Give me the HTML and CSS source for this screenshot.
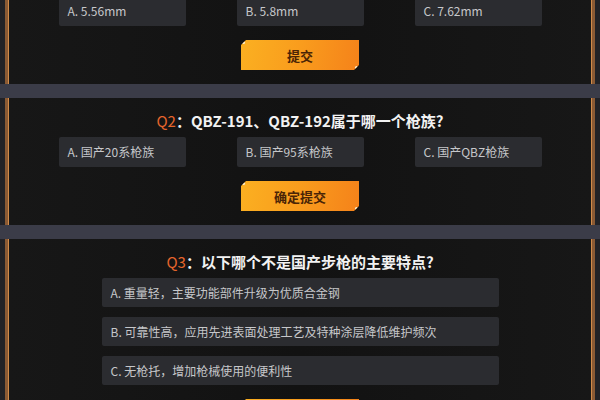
FILE: index.html
```html
<!DOCTYPE html>
<html lang="zh-CN">
<head>
    <meta charset="UTF-8">
    <meta name="viewport" content="width=device-width, initial-scale=1.0">
    <title>枪族知识问答</title>
    <link rel="stylesheet" href="styles.css">
</head>
<body>
    <div class="quiz">
        <section class="quiz-row first">
            <div class="card">
                <div class="options cols">
                    <div class="option">A. 5.56mm</div>
                    <div class="option">B. 5.8mm</div>
                    <div class="option">C. 7.62mm</div>
                </div>
                <button class="submit">提交</button>
            </div>
        </section>

        <section class="quiz-row">
            <div class="card">
                <h2 class="question"><span class="num">Q2</span>：QBZ-191、QBZ-192属于哪一个枪族?</h2>
                <div class="options cols">
                    <div class="option">A. 国产20系枪族</div>
                    <div class="option">B. 国产95系枪族</div>
                    <div class="option">C. 国产QBZ枪族</div>
                </div>
                <button class="submit">确定提交</button>
            </div>
        </section>

        <section class="quiz-row">
            <div class="card">
                <h2 class="question"><span class="num">Q3</span>：以下哪个不是国产步枪的主要特点?</h2>
                <div class="options list">
                    <div class="option">A. 重量轻，主要功能部件升级为优质合金钢</div>
                    <div class="option">B. 可靠性高，应用先进表面处理工艺及特种涂层降低维护频次</div>
                    <div class="option">C. 无枪托，增加枪械使用的便利性</div>
                </div>
                <button class="submit">确定提交</button>
            </div>
        </section>
    </div>
</body>
</html>
```

FILE: styles.css
```css
body {
    margin: 0;
    padding: 0;
    background-color: #3b3c48;
    font-family: "Noto Sans CJK SC", "Noto Sans", sans-serif;
    overflow: hidden;
}

.quiz {
    display: flex;
    flex-direction: column;
    gap: 14px;
}

.quiz-row {
    padding: 0 5px;
    background-color: #222226;
}

/* the first question is scrolled partly out of view */
.quiz-row.first {
    margin-top: -16px;
}

.quiz-row.first .card {
    padding-top: 12px;
}

.card {
    background: linear-gradient(90deg, #171717, #121212 50%, #171717);
    border-left: 3px solid #8a5a34;
    border-right: 3px solid #8a5a34;
    box-shadow: inset 1px 0 0 #d08a4a, inset -1px 0 0 #d08a4a;
    padding: 12px 0 14px;
    display: flex;
    flex-direction: column;
    align-items: center;
}

.question {
    margin: 0 0 5px;
    font-size: 15px;
    line-height: 22px;
    font-weight: bold;
    color: #f2f2f2;
}

.question .num {
    color: #e5652c;
    font-weight: normal;
}

.options.cols {
    display: grid;
    grid-template-columns: repeat(3, 127px);
    column-gap: 51px;
}

.options.list {
    display: flex;
    flex-direction: column;
    gap: 10px;
    width: 397px;
}

.option {
    background-color: #2b2c30;
    color: #c6c7ca;
    font-size: 12px;
    height: 30px;
    line-height: 30px;
    padding-left: 9px;
    border-radius: 2px;
}

.options.list .option {
    height: 29px;
    line-height: 29px;
}

.submit {
    margin-top: 14px;
    width: 118px;
    height: 30px;
    border: none;
    background: linear-gradient(100deg, #fbb021, #f99c1d 50%, #f5821a);
    color: #4a2406;
    font-family: inherit;
    font-size: 13px;
    font-weight: bold;
    clip-path: polygon(5px 0, 100% 0, 100% calc(100% - 5px), calc(100% - 5px) 100%, 0 100%, 0 5px);
    position: relative;
    cursor: pointer;
}

.submit::before,
.submit::after {
    content: "";
    position: absolute;
    width: 3px;
    height: 3px;
    background-color: #fff3d8;
    border-radius: 50%;
}

.submit::before {
    top: 1px;
    left: 1px;
}

.submit::after {
    bottom: 1px;
    right: 1px;
}
```
